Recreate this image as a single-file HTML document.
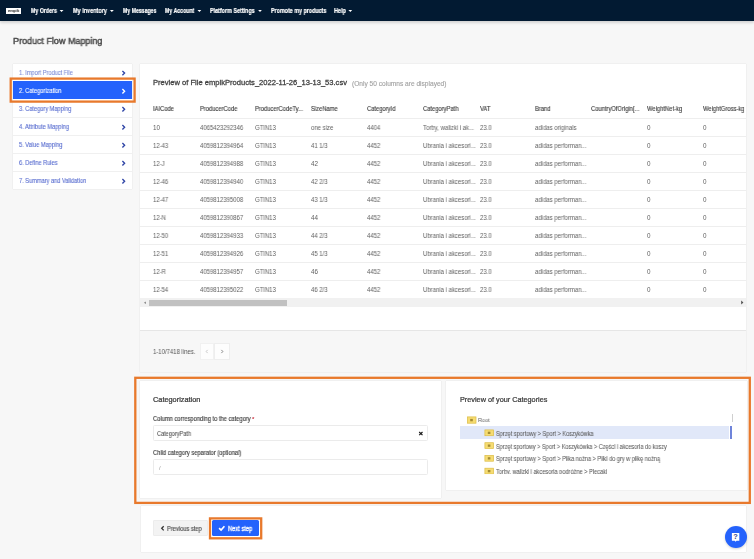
<!DOCTYPE html>
<html><head><meta charset="utf-8"><style>
html,body{margin:0;padding:0;}
body{width:754px;height:559px;overflow:hidden;position:relative;background:#f7f7f7;font-family:"Liberation Sans",sans-serif;}
.t{position:absolute;white-space:pre;line-height:normal;transform-origin:0 0;will-change:transform;}
.a{position:absolute;}
#nav{left:0;top:0;width:754px;height:20.6px;background:#021a32;box-shadow:0 1.5px 3px rgba(0,0,0,0.18);}
.caret{position:absolute;width:0;height:0;border-left:1.8px solid transparent;border-right:1.8px solid transparent;border-top:2px solid #fff;}
.panel{position:absolute;background:#fff;box-shadow:0 0 1px rgba(0,0,0,0.18);}
.sep{position:absolute;height:1px;background:#f0f0f0;}
.row{position:absolute;left:140px;width:606px;height:1px;background:#eeeeee;}

</style></head><body>
<div id="nav" class="a"></div>
<div class="a" style="left:5.9px;top:7.8px;width:15.3px;height:6.1px;background:#fff;"></div>
<svg class="a" style="left:0;top:0" width="360" height="20" viewBox="0 0 360 20">
 <g fill="#fff">
  <path d="M59.6 10.1 L63.5 10.1 L61.55 12 Z"/>
  <path d="M109.9 10.1 L113.8 10.1 L111.85 12 Z"/>
  <path d="M197.5 10.1 L201.3 10.1 L199.4 12 Z"/>
  <path d="M258.1 10.1 L261.9 10.1 L260 12 Z"/>
  <path d="M348.4 10.1 L352.2 10.1 L350.3 12 Z"/>
 </g>
</svg>

<!-- sidebar -->
<div class="panel" style="left:12.5px;top:64px;width:119.7px;height:125.2px;"></div>
<div class="a" style="left:12.5px;top:81.2px;width:119.5px;height:17.4px;background:#2462fc;"></div>
<div class="sep" style="left:12.5px;width:119.7px;top:117px"></div>
<div class="sep" style="left:12.5px;width:119.7px;top:135px"></div>
<div class="sep" style="left:12.5px;width:119.7px;top:153px"></div>
<div class="sep" style="left:12.5px;width:119.7px;top:171px"></div>
<svg class="a" style="left:0;top:0" width="140" height="200" viewBox="0 0 140 200">
 <g fill="none" stroke-width="1.35" stroke-linecap="butt" stroke-linejoin="miter">
  <path d="M122.4 70.9 L124.6 73.1 L122.4 75.3" stroke="#2f45a6"/>
  <path d="M122.4 89.0 L124.6 91.2 L122.4 93.4" stroke="#ffffff"/>
  <path d="M122.4 107.0 L124.6 109.2 L122.4 111.4" stroke="#2f45a6"/>
  <path d="M122.4 125.0 L124.6 127.2 L122.4 129.4" stroke="#2f45a6"/>
  <path d="M122.4 143.0 L124.6 145.2 L122.4 147.4" stroke="#2f45a6"/>
  <path d="M122.4 161.0 L124.6 163.2 L122.4 165.4" stroke="#2f45a6"/>
  <path d="M122.4 179.0 L124.6 181.2 L122.4 183.4" stroke="#2f45a6"/>
 </g>
</svg>

<!-- main table panel -->
<div class="panel" style="left:140px;top:64px;width:606px;height:308px;"></div>
<div class="a" style="left:140px;top:330px;width:606px;height:42px;background:#f7f7f7;border-top:1px solid #e6e6e6;box-sizing:border-box;"></div>
<div class="row" style="top:118px"></div>
<div class="row" style="top:136px"></div>
<div class="row" style="top:154px"></div>
<div class="row" style="top:172px"></div>
<div class="row" style="top:190px"></div>
<div class="row" style="top:208px"></div>
<div class="row" style="top:226px"></div>
<div class="row" style="top:244px"></div>
<div class="row" style="top:262px"></div>
<div class="row" style="top:280px"></div>
<!-- scrollbar -->
<div class="a" style="left:140px;top:298px;width:605.5px;height:9px;background:#f1f1f1;"></div>
<div class="a" style="left:149px;top:299.8px;width:138.4px;height:6.7px;background:#c1c1c1;"></div>
<svg class="a" style="left:0;top:290" width="754" height="20" viewBox="0 290 754 20">
 <path d="M741.2 300.6 L743.4 302.6 L741.2 304.6 Z" fill="#505050"/>
 <path d="M145.9 301.5 L143.9 302.8 L145.9 304.1 Z" fill="#808080"/>
</svg>
<!-- pagination buttons -->
<div class="a" style="left:199.8px;top:343.4px;width:14.3px;height:16.2px;background:#fdfdfd;border:1px solid #f1f1f1;box-sizing:border-box;"></div>
<div class="a" style="left:213.8px;top:343.4px;width:16px;height:16.2px;background:#fdfdfd;border:1px solid #eeeeee;box-sizing:border-box;"></div>
<svg class="a" style="left:190px;top:340px" width="50" height="25" viewBox="190 340 50 25">
 <path d="M207.6 349.9 L206.2 351.5 L207.6 353.1" fill="none" stroke="#c2c2c2" stroke-width="0.9"/>
 <path d="M221.4 349.9 L222.8 351.5 L221.4 353.1" fill="none" stroke="#7a7a7a" stroke-width="0.9"/>
</svg>

<!-- categorization cards -->
<div class="panel" style="left:140px;top:381.3px;width:300.5px;height:116.3px;"></div>
<div class="a" style="left:152.8px;top:425.1px;width:275px;height:16.4px;border:1px solid #ebebeb;border-radius:1.5px;box-sizing:border-box;"></div>
<div class="a" style="left:152.8px;top:459.4px;width:275px;height:16.1px;border:1px solid #ebebeb;border-radius:1.5px;box-sizing:border-box;"></div>
<svg class="a" style="left:410px;top:420px" width="30" height="30" viewBox="410 420 30 30">
 <path d="M419.2 432.0 L422.5 435.1 M422.5 432.0 L419.2 435.1" stroke="#1a1a1a" stroke-width="1.2"/>
</svg>
<div class="panel" style="left:446.4px;top:381.3px;width:300.2px;height:108.5px;"></div>
<div class="a" style="left:459.7px;top:426.1px;width:269.6px;height:13.2px;background:#e1e8f9;"></div>
<div class="a" style="left:730.2px;top:426.1px;width:1.9px;height:13.2px;background:#6f84da;"></div>
<div class="a" style="left:732.0px;top:413.7px;width:1.3px;height:8px;background:#cfcfcf;"></div>
<svg class="a" style="left:460px;top:410px" width="40" height="70" viewBox="460 410 40 70">
 <g>
  <rect x="467.4" y="416.9" width="8.6" height="6.3" fill="#f6dc72" stroke="#dcbc45" stroke-width="0.7"/>
  <rect x="470.2" y="418.9" width="2.6" height="2.4" fill="#a48c34"/>
  <rect x="484.9" y="429.9" width="8.7" height="5.8" fill="#f6dc72" stroke="#dcbc45" stroke-width="0.7"/>
  <rect x="487.8" y="431.7" width="2.6" height="2.3" fill="#a48c34"/>
  <rect x="484.9" y="442.7" width="8.7" height="5.8" fill="#f6dc72" stroke="#dcbc45" stroke-width="0.7"/>
  <rect x="487.8" y="444.5" width="2.6" height="2.3" fill="#a48c34"/>
  <rect x="484.9" y="455.4" width="8.7" height="5.8" fill="#f6dc72" stroke="#dcbc45" stroke-width="0.7"/>
  <rect x="487.8" y="457.2" width="2.6" height="2.3" fill="#a48c34"/>
  <rect x="484.9" y="468.2" width="8.7" height="5.8" fill="#f6dc72" stroke="#dcbc45" stroke-width="0.7"/>
  <rect x="487.8" y="470.0" width="2.6" height="2.3" fill="#a48c34"/>
 </g>
 <rect x="460" y="474.1" width="40" height="6" fill="#fff"/>
</svg>

<!-- bottom panel -->
<div class="panel" style="left:140.5px;top:505.8px;width:605.5px;height:46.5px;"></div>
<div class="a" style="left:153.4px;top:520px;width:54.3px;height:15.8px;background:#f3f3f3;border:1px solid #ececec;box-sizing:border-box;border-radius:1px;"></div>
<div class="a" style="left:212px;top:520px;width:46.7px;height:16.3px;background:#2462fc;border-radius:1.5px;"></div>
<svg class="a" style="left:150px;top:515px" width="80" height="25" viewBox="150 515 80 25">
 <path d="M163.7 526.2 L161.7 528.3 L163.7 530.4" fill="none" stroke="#333" stroke-width="1.3"/>
 <path d="M219.1 528.1 L221.1 530.0 L224.4 526.3" fill="none" stroke="#fff" stroke-width="1.7"/>
</svg>
<!-- help -->
<div class="a" style="left:724.5px;top:526.2px;width:22.3px;height:22.3px;border-radius:50%;background:#2462fc;box-shadow:0 1px 2.5px rgba(0,0,0,0.18);"></div>
<svg class="a" style="left:720px;top:520px" width="34" height="34" viewBox="720 520 34 34">
 <path d="M731.9 533.1 H739.3 V540.7 H736.5 L735.6 541.8 L734.7 540.7 H731.9 Z" fill="#fff"/>
 <text x="735.6" y="539.4" font-family="Liberation Sans" font-size="7.4" font-weight="bold" fill="#34468c" text-anchor="middle">?</text>
</svg>

<!-- annotation boxes -->
<svg class="a" style="left:0;top:0" width="754" height="559" viewBox="0 0 754 559">
 <g fill="none" stroke="#e8792c" stroke-width="2.3">
  <rect x="10.7" y="78.6" width="123.9" height="23.0"/>
  <rect x="135.3" y="377.8" width="614.5" height="125.1"/>
  <rect x="210.0" y="518.4" width="51.2" height="19.9"/>
 </g>
</svg>

<span class="t" style="left:7.80px;top:8.00px;font-size:4.2px;font-weight:bold;color:#1e1e1e;transform:scaleX(0.9332);">empik</span>
<span class="t" style="left:30.90px;top:7.21px;font-size:6.4px;font-weight:bold;color:#ffffff;transform:scaleX(0.8221);-webkit-text-stroke:0.2px currentColor;">My Orders</span>
<span class="t" style="left:73.00px;top:7.21px;font-size:6.4px;font-weight:bold;color:#ffffff;transform:scaleX(0.8599);-webkit-text-stroke:0.2px currentColor;">My Inventory</span>
<span class="t" style="left:122.60px;top:7.21px;font-size:6.4px;font-weight:bold;color:#ffffff;transform:scaleX(0.8103);-webkit-text-stroke:0.2px currentColor;">My Messages</span>
<span class="t" style="left:164.70px;top:7.21px;font-size:6.4px;font-weight:bold;color:#ffffff;transform:scaleX(0.8142);-webkit-text-stroke:0.2px currentColor;">My Account</span>
<span class="t" style="left:210.00px;top:7.21px;font-size:6.4px;font-weight:bold;color:#ffffff;transform:scaleX(0.8446);-webkit-text-stroke:0.2px currentColor;">Platform Settings</span>
<span class="t" style="left:270.60px;top:7.21px;font-size:6.4px;font-weight:bold;color:#ffffff;transform:scaleX(0.8386);-webkit-text-stroke:0.2px currentColor;">Promote my products</span>
<span class="t" style="left:333.90px;top:7.21px;font-size:6.4px;font-weight:bold;color:#ffffff;transform:scaleX(0.8586);-webkit-text-stroke:0.2px currentColor;">Help</span>
<span class="t" style="left:12.80px;top:35.77px;font-size:9.2px;font-weight:normal;color:#474747;transform:scaleX(0.9779);-webkit-text-stroke:0.42px currentColor;">Product Flow Mapping</span>
<span class="t" style="left:19.10px;top:69.20px;font-size:6.3px;font-weight:normal;color:#7d8bd6;transform:scaleX(0.8937);-webkit-text-stroke:0.1px currentColor;">1. Import Product File</span>
<span class="t" style="left:19.10px;top:87.20px;font-size:6.3px;font-weight:normal;color:#ffffff;transform:scaleX(0.8937);-webkit-text-stroke:0.1px currentColor;">2. Categorization</span>
<span class="t" style="left:19.10px;top:105.30px;font-size:6.3px;font-weight:normal;color:#566bcf;transform:scaleX(0.8937);-webkit-text-stroke:0.1px currentColor;">3. Category Mapping</span>
<span class="t" style="left:19.10px;top:123.30px;font-size:6.3px;font-weight:normal;color:#566bcf;transform:scaleX(0.8937);-webkit-text-stroke:0.1px currentColor;">4. Attribute Mapping</span>
<span class="t" style="left:19.10px;top:141.30px;font-size:6.3px;font-weight:normal;color:#566bcf;transform:scaleX(0.8937);-webkit-text-stroke:0.1px currentColor;">5. Value Mapping</span>
<span class="t" style="left:19.10px;top:159.30px;font-size:6.3px;font-weight:normal;color:#566bcf;transform:scaleX(0.8937);-webkit-text-stroke:0.1px currentColor;">6. Define Rules</span>
<span class="t" style="left:19.10px;top:177.30px;font-size:6.3px;font-weight:normal;color:#566bcf;transform:scaleX(0.8937);-webkit-text-stroke:0.1px currentColor;">7. Summary and Validation</span>
<span class="t" style="left:153.40px;top:78.49px;font-size:7.3px;font-weight:normal;color:#404040;transform:scaleX(1.0382);-webkit-text-stroke:0.26px currentColor;">Preview of File empikProducts_2022-11-26_13-13_53.csv</span>
<span class="t" style="left:351.80px;top:80.01px;font-size:6.4px;font-weight:normal;color:#a2a2a2;transform:scaleX(1.0310);-webkit-text-stroke:0.12px currentColor;">(Only 50 columns are displayed)</span>
<span class="t" style="left:153.20px;top:105.22px;font-size:6.5px;font-weight:normal;color:#404040;transform:scaleX(0.8934);-webkit-text-stroke:0.14px currentColor;">IAICode</span>
<span class="t" style="left:199.80px;top:105.22px;font-size:6.5px;font-weight:normal;color:#404040;transform:scaleX(0.8934);-webkit-text-stroke:0.14px currentColor;">ProducerCode</span>
<span class="t" style="left:255.00px;top:105.22px;font-size:6.5px;font-weight:normal;color:#404040;transform:scaleX(0.8934);-webkit-text-stroke:0.14px currentColor;">ProducerCodeTy...</span>
<span class="t" style="left:311.00px;top:105.22px;font-size:6.5px;font-weight:normal;color:#404040;transform:scaleX(0.8934);-webkit-text-stroke:0.14px currentColor;">SizeName</span>
<span class="t" style="left:367.00px;top:105.22px;font-size:6.5px;font-weight:normal;color:#404040;transform:scaleX(0.8934);-webkit-text-stroke:0.14px currentColor;">CategoryId</span>
<span class="t" style="left:423.00px;top:105.22px;font-size:6.5px;font-weight:normal;color:#404040;transform:scaleX(0.8934);-webkit-text-stroke:0.14px currentColor;">CategoryPath</span>
<span class="t" style="left:479.50px;top:105.22px;font-size:6.5px;font-weight:normal;color:#404040;transform:scaleX(0.8934);-webkit-text-stroke:0.14px currentColor;">VAT</span>
<span class="t" style="left:535.00px;top:105.22px;font-size:6.5px;font-weight:normal;color:#404040;transform:scaleX(0.8934);-webkit-text-stroke:0.14px currentColor;">Brand</span>
<span class="t" style="left:591.20px;top:105.22px;font-size:6.5px;font-weight:normal;color:#404040;transform:scaleX(0.8934);-webkit-text-stroke:0.14px currentColor;">CountryOfOrigin[...</span>
<span class="t" style="left:647.00px;top:105.22px;font-size:6.5px;font-weight:normal;color:#404040;transform:scaleX(0.8934);-webkit-text-stroke:0.14px currentColor;">WeightNet-kg</span>
<span class="t" style="left:703.20px;top:105.22px;font-size:6.5px;font-weight:normal;color:#404040;transform:scaleX(0.8934);-webkit-text-stroke:0.14px currentColor;">WeightGross-kg</span>
<span class="t" style="left:153.20px;top:124.10px;font-size:6.3px;font-weight:normal;color:#5e5e5e;transform:scaleX(0.9488);">10</span>
<span class="t" style="left:199.80px;top:124.10px;font-size:6.3px;font-weight:normal;color:#5e5e5e;transform:scaleX(0.9488);">4065423292346</span>
<span class="t" style="left:255.00px;top:124.10px;font-size:6.3px;font-weight:normal;color:#5e5e5e;transform:scaleX(0.9488);">GTIN13</span>
<span class="t" style="left:311.00px;top:124.10px;font-size:6.3px;font-weight:normal;color:#5e5e5e;transform:scaleX(0.9488);">one size</span>
<span class="t" style="left:367.00px;top:124.10px;font-size:6.3px;font-weight:normal;color:#5e5e5e;transform:scaleX(0.9488);">4404</span>
<span class="t" style="left:423.00px;top:124.10px;font-size:6.3px;font-weight:normal;color:#5e5e5e;transform:scaleX(0.9488);">Torby, walizki i ak...</span>
<span class="t" style="left:479.50px;top:124.10px;font-size:6.3px;font-weight:normal;color:#5e5e5e;transform:scaleX(0.9488);">23.0</span>
<span class="t" style="left:535.00px;top:124.10px;font-size:6.3px;font-weight:normal;color:#5e5e5e;transform:scaleX(0.9488);">adidas originals</span>
<span class="t" style="left:647.00px;top:124.10px;font-size:6.3px;font-weight:normal;color:#5e5e5e;transform:scaleX(0.9488);">0</span>
<span class="t" style="left:703.20px;top:124.10px;font-size:6.3px;font-weight:normal;color:#5e5e5e;transform:scaleX(0.9488);">0</span>
<span class="t" style="left:153.20px;top:142.10px;font-size:6.3px;font-weight:normal;color:#5e5e5e;transform:scaleX(0.9488);">12-43</span>
<span class="t" style="left:199.80px;top:142.10px;font-size:6.3px;font-weight:normal;color:#5e5e5e;transform:scaleX(0.9488);">4059812394964</span>
<span class="t" style="left:255.00px;top:142.10px;font-size:6.3px;font-weight:normal;color:#5e5e5e;transform:scaleX(0.9488);">GTIN13</span>
<span class="t" style="left:311.00px;top:142.10px;font-size:6.3px;font-weight:normal;color:#5e5e5e;transform:scaleX(0.9488);">41 1/3</span>
<span class="t" style="left:367.00px;top:142.10px;font-size:6.3px;font-weight:normal;color:#5e5e5e;transform:scaleX(0.9488);">4452</span>
<span class="t" style="left:423.00px;top:142.10px;font-size:6.3px;font-weight:normal;color:#5e5e5e;transform:scaleX(0.9488);">Ubrania i akcesori...</span>
<span class="t" style="left:479.50px;top:142.10px;font-size:6.3px;font-weight:normal;color:#5e5e5e;transform:scaleX(0.9488);">23.0</span>
<span class="t" style="left:535.00px;top:142.10px;font-size:6.3px;font-weight:normal;color:#5e5e5e;transform:scaleX(0.9488);">adidas performan...</span>
<span class="t" style="left:647.00px;top:142.10px;font-size:6.3px;font-weight:normal;color:#5e5e5e;transform:scaleX(0.9488);">0</span>
<span class="t" style="left:703.20px;top:142.10px;font-size:6.3px;font-weight:normal;color:#5e5e5e;transform:scaleX(0.9488);">0</span>
<span class="t" style="left:153.20px;top:160.10px;font-size:6.3px;font-weight:normal;color:#5e5e5e;transform:scaleX(0.9488);">12-J</span>
<span class="t" style="left:199.80px;top:160.10px;font-size:6.3px;font-weight:normal;color:#5e5e5e;transform:scaleX(0.9488);">4059812394988</span>
<span class="t" style="left:255.00px;top:160.10px;font-size:6.3px;font-weight:normal;color:#5e5e5e;transform:scaleX(0.9488);">GTIN13</span>
<span class="t" style="left:311.00px;top:160.10px;font-size:6.3px;font-weight:normal;color:#5e5e5e;transform:scaleX(0.9488);">42</span>
<span class="t" style="left:367.00px;top:160.10px;font-size:6.3px;font-weight:normal;color:#5e5e5e;transform:scaleX(0.9488);">4452</span>
<span class="t" style="left:423.00px;top:160.10px;font-size:6.3px;font-weight:normal;color:#5e5e5e;transform:scaleX(0.9488);">Ubrania i akcesori...</span>
<span class="t" style="left:479.50px;top:160.10px;font-size:6.3px;font-weight:normal;color:#5e5e5e;transform:scaleX(0.9488);">23.0</span>
<span class="t" style="left:535.00px;top:160.10px;font-size:6.3px;font-weight:normal;color:#5e5e5e;transform:scaleX(0.9488);">adidas performan...</span>
<span class="t" style="left:647.00px;top:160.10px;font-size:6.3px;font-weight:normal;color:#5e5e5e;transform:scaleX(0.9488);">0</span>
<span class="t" style="left:703.20px;top:160.10px;font-size:6.3px;font-weight:normal;color:#5e5e5e;transform:scaleX(0.9488);">0</span>
<span class="t" style="left:153.20px;top:178.10px;font-size:6.3px;font-weight:normal;color:#5e5e5e;transform:scaleX(0.9488);">12-46</span>
<span class="t" style="left:199.80px;top:178.10px;font-size:6.3px;font-weight:normal;color:#5e5e5e;transform:scaleX(0.9488);">4059812394940</span>
<span class="t" style="left:255.00px;top:178.10px;font-size:6.3px;font-weight:normal;color:#5e5e5e;transform:scaleX(0.9488);">GTIN13</span>
<span class="t" style="left:311.00px;top:178.10px;font-size:6.3px;font-weight:normal;color:#5e5e5e;transform:scaleX(0.9488);">42 2/3</span>
<span class="t" style="left:367.00px;top:178.10px;font-size:6.3px;font-weight:normal;color:#5e5e5e;transform:scaleX(0.9488);">4452</span>
<span class="t" style="left:423.00px;top:178.10px;font-size:6.3px;font-weight:normal;color:#5e5e5e;transform:scaleX(0.9488);">Ubrania i akcesori...</span>
<span class="t" style="left:479.50px;top:178.10px;font-size:6.3px;font-weight:normal;color:#5e5e5e;transform:scaleX(0.9488);">23.0</span>
<span class="t" style="left:535.00px;top:178.10px;font-size:6.3px;font-weight:normal;color:#5e5e5e;transform:scaleX(0.9488);">adidas performan...</span>
<span class="t" style="left:647.00px;top:178.10px;font-size:6.3px;font-weight:normal;color:#5e5e5e;transform:scaleX(0.9488);">0</span>
<span class="t" style="left:703.20px;top:178.10px;font-size:6.3px;font-weight:normal;color:#5e5e5e;transform:scaleX(0.9488);">0</span>
<span class="t" style="left:153.20px;top:196.10px;font-size:6.3px;font-weight:normal;color:#5e5e5e;transform:scaleX(0.9488);">12-47</span>
<span class="t" style="left:199.80px;top:196.10px;font-size:6.3px;font-weight:normal;color:#5e5e5e;transform:scaleX(0.9488);">4059812395008</span>
<span class="t" style="left:255.00px;top:196.10px;font-size:6.3px;font-weight:normal;color:#5e5e5e;transform:scaleX(0.9488);">GTIN13</span>
<span class="t" style="left:311.00px;top:196.10px;font-size:6.3px;font-weight:normal;color:#5e5e5e;transform:scaleX(0.9488);">43 1/3</span>
<span class="t" style="left:367.00px;top:196.10px;font-size:6.3px;font-weight:normal;color:#5e5e5e;transform:scaleX(0.9488);">4452</span>
<span class="t" style="left:423.00px;top:196.10px;font-size:6.3px;font-weight:normal;color:#5e5e5e;transform:scaleX(0.9488);">Ubrania i akcesori...</span>
<span class="t" style="left:479.50px;top:196.10px;font-size:6.3px;font-weight:normal;color:#5e5e5e;transform:scaleX(0.9488);">23.0</span>
<span class="t" style="left:535.00px;top:196.10px;font-size:6.3px;font-weight:normal;color:#5e5e5e;transform:scaleX(0.9488);">adidas performan...</span>
<span class="t" style="left:647.00px;top:196.10px;font-size:6.3px;font-weight:normal;color:#5e5e5e;transform:scaleX(0.9488);">0</span>
<span class="t" style="left:703.20px;top:196.10px;font-size:6.3px;font-weight:normal;color:#5e5e5e;transform:scaleX(0.9488);">0</span>
<span class="t" style="left:153.20px;top:214.10px;font-size:6.3px;font-weight:normal;color:#5e5e5e;transform:scaleX(0.9488);">12-N</span>
<span class="t" style="left:199.80px;top:214.10px;font-size:6.3px;font-weight:normal;color:#5e5e5e;transform:scaleX(0.9488);">4059812390867</span>
<span class="t" style="left:255.00px;top:214.10px;font-size:6.3px;font-weight:normal;color:#5e5e5e;transform:scaleX(0.9488);">GTIN13</span>
<span class="t" style="left:311.00px;top:214.10px;font-size:6.3px;font-weight:normal;color:#5e5e5e;transform:scaleX(0.9488);">44</span>
<span class="t" style="left:367.00px;top:214.10px;font-size:6.3px;font-weight:normal;color:#5e5e5e;transform:scaleX(0.9488);">4452</span>
<span class="t" style="left:423.00px;top:214.10px;font-size:6.3px;font-weight:normal;color:#5e5e5e;transform:scaleX(0.9488);">Ubrania i akcesori...</span>
<span class="t" style="left:479.50px;top:214.10px;font-size:6.3px;font-weight:normal;color:#5e5e5e;transform:scaleX(0.9488);">23.0</span>
<span class="t" style="left:535.00px;top:214.10px;font-size:6.3px;font-weight:normal;color:#5e5e5e;transform:scaleX(0.9488);">adidas performan...</span>
<span class="t" style="left:647.00px;top:214.10px;font-size:6.3px;font-weight:normal;color:#5e5e5e;transform:scaleX(0.9488);">0</span>
<span class="t" style="left:703.20px;top:214.10px;font-size:6.3px;font-weight:normal;color:#5e5e5e;transform:scaleX(0.9488);">0</span>
<span class="t" style="left:153.20px;top:232.10px;font-size:6.3px;font-weight:normal;color:#5e5e5e;transform:scaleX(0.9488);">12-50</span>
<span class="t" style="left:199.80px;top:232.10px;font-size:6.3px;font-weight:normal;color:#5e5e5e;transform:scaleX(0.9488);">4059812394933</span>
<span class="t" style="left:255.00px;top:232.10px;font-size:6.3px;font-weight:normal;color:#5e5e5e;transform:scaleX(0.9488);">GTIN13</span>
<span class="t" style="left:311.00px;top:232.10px;font-size:6.3px;font-weight:normal;color:#5e5e5e;transform:scaleX(0.9488);">44 2/3</span>
<span class="t" style="left:367.00px;top:232.10px;font-size:6.3px;font-weight:normal;color:#5e5e5e;transform:scaleX(0.9488);">4452</span>
<span class="t" style="left:423.00px;top:232.10px;font-size:6.3px;font-weight:normal;color:#5e5e5e;transform:scaleX(0.9488);">Ubrania i akcesori...</span>
<span class="t" style="left:479.50px;top:232.10px;font-size:6.3px;font-weight:normal;color:#5e5e5e;transform:scaleX(0.9488);">23.0</span>
<span class="t" style="left:535.00px;top:232.10px;font-size:6.3px;font-weight:normal;color:#5e5e5e;transform:scaleX(0.9488);">adidas performan...</span>
<span class="t" style="left:647.00px;top:232.10px;font-size:6.3px;font-weight:normal;color:#5e5e5e;transform:scaleX(0.9488);">0</span>
<span class="t" style="left:703.20px;top:232.10px;font-size:6.3px;font-weight:normal;color:#5e5e5e;transform:scaleX(0.9488);">0</span>
<span class="t" style="left:153.20px;top:250.10px;font-size:6.3px;font-weight:normal;color:#5e5e5e;transform:scaleX(0.9488);">12-51</span>
<span class="t" style="left:199.80px;top:250.10px;font-size:6.3px;font-weight:normal;color:#5e5e5e;transform:scaleX(0.9488);">4059812394926</span>
<span class="t" style="left:255.00px;top:250.10px;font-size:6.3px;font-weight:normal;color:#5e5e5e;transform:scaleX(0.9488);">GTIN13</span>
<span class="t" style="left:311.00px;top:250.10px;font-size:6.3px;font-weight:normal;color:#5e5e5e;transform:scaleX(0.9488);">45 1/3</span>
<span class="t" style="left:367.00px;top:250.10px;font-size:6.3px;font-weight:normal;color:#5e5e5e;transform:scaleX(0.9488);">4452</span>
<span class="t" style="left:423.00px;top:250.10px;font-size:6.3px;font-weight:normal;color:#5e5e5e;transform:scaleX(0.9488);">Ubrania i akcesori...</span>
<span class="t" style="left:479.50px;top:250.10px;font-size:6.3px;font-weight:normal;color:#5e5e5e;transform:scaleX(0.9488);">23.0</span>
<span class="t" style="left:535.00px;top:250.10px;font-size:6.3px;font-weight:normal;color:#5e5e5e;transform:scaleX(0.9488);">adidas performan...</span>
<span class="t" style="left:647.00px;top:250.10px;font-size:6.3px;font-weight:normal;color:#5e5e5e;transform:scaleX(0.9488);">0</span>
<span class="t" style="left:703.20px;top:250.10px;font-size:6.3px;font-weight:normal;color:#5e5e5e;transform:scaleX(0.9488);">0</span>
<span class="t" style="left:153.20px;top:268.10px;font-size:6.3px;font-weight:normal;color:#5e5e5e;transform:scaleX(0.9488);">12-R</span>
<span class="t" style="left:199.80px;top:268.10px;font-size:6.3px;font-weight:normal;color:#5e5e5e;transform:scaleX(0.9488);">4059812394957</span>
<span class="t" style="left:255.00px;top:268.10px;font-size:6.3px;font-weight:normal;color:#5e5e5e;transform:scaleX(0.9488);">GTIN13</span>
<span class="t" style="left:311.00px;top:268.10px;font-size:6.3px;font-weight:normal;color:#5e5e5e;transform:scaleX(0.9488);">46</span>
<span class="t" style="left:367.00px;top:268.10px;font-size:6.3px;font-weight:normal;color:#5e5e5e;transform:scaleX(0.9488);">4452</span>
<span class="t" style="left:423.00px;top:268.10px;font-size:6.3px;font-weight:normal;color:#5e5e5e;transform:scaleX(0.9488);">Ubrania i akcesori...</span>
<span class="t" style="left:479.50px;top:268.10px;font-size:6.3px;font-weight:normal;color:#5e5e5e;transform:scaleX(0.9488);">23.0</span>
<span class="t" style="left:535.00px;top:268.10px;font-size:6.3px;font-weight:normal;color:#5e5e5e;transform:scaleX(0.9488);">adidas performan...</span>
<span class="t" style="left:647.00px;top:268.10px;font-size:6.3px;font-weight:normal;color:#5e5e5e;transform:scaleX(0.9488);">0</span>
<span class="t" style="left:703.20px;top:268.10px;font-size:6.3px;font-weight:normal;color:#5e5e5e;transform:scaleX(0.9488);">0</span>
<span class="t" style="left:153.20px;top:286.10px;font-size:6.3px;font-weight:normal;color:#5e5e5e;transform:scaleX(0.9488);">12-54</span>
<span class="t" style="left:199.80px;top:286.10px;font-size:6.3px;font-weight:normal;color:#5e5e5e;transform:scaleX(0.9488);">4059812395022</span>
<span class="t" style="left:255.00px;top:286.10px;font-size:6.3px;font-weight:normal;color:#5e5e5e;transform:scaleX(0.9488);">GTIN13</span>
<span class="t" style="left:311.00px;top:286.10px;font-size:6.3px;font-weight:normal;color:#5e5e5e;transform:scaleX(0.9488);">46 2/3</span>
<span class="t" style="left:367.00px;top:286.10px;font-size:6.3px;font-weight:normal;color:#5e5e5e;transform:scaleX(0.9488);">4452</span>
<span class="t" style="left:423.00px;top:286.10px;font-size:6.3px;font-weight:normal;color:#5e5e5e;transform:scaleX(0.9488);">Ubrania i akcesori...</span>
<span class="t" style="left:479.50px;top:286.10px;font-size:6.3px;font-weight:normal;color:#5e5e5e;transform:scaleX(0.9488);">23.0</span>
<span class="t" style="left:535.00px;top:286.10px;font-size:6.3px;font-weight:normal;color:#5e5e5e;transform:scaleX(0.9488);">adidas performan...</span>
<span class="t" style="left:647.00px;top:286.10px;font-size:6.3px;font-weight:normal;color:#5e5e5e;transform:scaleX(0.9488);">0</span>
<span class="t" style="left:703.20px;top:286.10px;font-size:6.3px;font-weight:normal;color:#5e5e5e;transform:scaleX(0.9488);">0</span>
<span class="t" style="left:153.30px;top:347.62px;font-size:6.5px;font-weight:normal;color:#555555;transform:scaleX(0.9164);">1-10/7418 lines.</span>
<span class="t" style="left:153.40px;top:396.07px;font-size:7.1px;font-weight:normal;color:#383838;transform:scaleX(1.0361);-webkit-text-stroke:0.24px currentColor;">Categorization</span>
<span class="t" style="left:153.40px;top:414.93px;font-size:6.6px;font-weight:normal;color:#444444;transform:scaleX(0.8730);-webkit-text-stroke:0.17px currentColor;">Column corresponding to the category</span>
<span class="t" style="left:251.80px;top:416.17px;font-size:6.0px;font-weight:bold;color:#c9303f;">*</span>
<span class="t" style="left:156.80px;top:429.62px;font-size:6.5px;font-weight:normal;color:#505050;transform:scaleX(0.8553);-webkit-text-stroke:0.08px currentColor;">CategoryPath</span>
<span class="t" style="left:153.40px;top:449.13px;font-size:6.6px;font-weight:normal;color:#444444;transform:scaleX(0.8728);-webkit-text-stroke:0.17px currentColor;">Child category separator (optional)</span>
<span class="t" style="left:158.80px;top:464.75px;font-size:5.8px;font-weight:normal;color:#9a9a9a;">/</span>
<span class="t" style="left:459.50px;top:396.07px;font-size:7.1px;font-weight:normal;color:#383838;transform:scaleX(1.0262);-webkit-text-stroke:0.22px currentColor;">Preview of your Categories</span>
<span class="t" style="left:478.20px;top:416.57px;font-size:6.0px;font-weight:normal;color:#666666;transform:scaleX(0.9300);">Root</span>
<span class="t" style="left:495.80px;top:429.81px;font-size:6.4px;font-weight:normal;color:#585858;transform:scaleX(0.8769);-webkit-text-stroke:0.06px currentColor;">Sprzęt sportowy > Sport > Koszykówka</span>
<span class="t" style="left:495.80px;top:442.58px;font-size:6.4px;font-weight:normal;color:#585858;transform:scaleX(0.8672);-webkit-text-stroke:0.06px currentColor;">Sprzęt sportowy > Sport > Koszykówka > Części i akcesoria do koszy</span>
<span class="t" style="left:495.80px;top:455.35px;font-size:6.4px;font-weight:normal;color:#585858;transform:scaleX(0.8736);-webkit-text-stroke:0.06px currentColor;">Sprzęt sportowy > Sport > Piłka nożna > Piłki do gry w piłkę nożną</span>
<span class="t" style="left:495.80px;top:468.12px;font-size:6.4px;font-weight:normal;color:#585858;transform:scaleX(0.8814);-webkit-text-stroke:0.06px currentColor;clip-path:inset(0 0 1.9px 0);">Torby, walizki i akcesoria podróżne > Plecaki</span>
<span class="t" style="left:167.30px;top:524.63px;font-size:6.6px;font-weight:normal;color:#555555;transform:scaleX(0.8710);-webkit-text-stroke:0.2px currentColor;">Previous step</span>
<span class="t" style="left:227.90px;top:524.63px;font-size:6.6px;font-weight:normal;color:#ffffff;transform:scaleX(0.8686);-webkit-text-stroke:0.3px currentColor;">Next step</span>

</body></html>
